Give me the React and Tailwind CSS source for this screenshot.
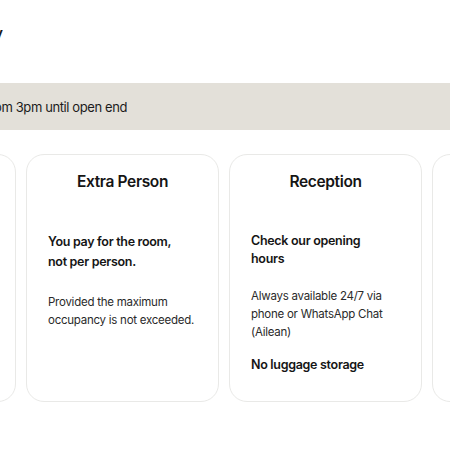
const cards = [
  {
    title: "Check-in",
    blocks: [
      { kind: "bold", lines: ["From 3pm"] },
      { kind: "small", lines: ["Self check-in with code."] },
    ],
  },
  {
    title: "Extra Person",
    blocks: [
      { kind: "bold", lines: ["You pay for the room,", "not per person."], lead: "leading-[20px]" },
      { kind: "small", lines: ["Provided the maximum", "occupancy is not exceeded."], gap: "mt-[21px]" },
    ],
  },
  {
    title: "Reception",
    blocks: [
      { kind: "bold", lines: ["Check our opening", "hours"], lead: "leading-[18px]" },
      { kind: "small", lines: ["Always available 24/7 via", "phone or WhatsApp Chat", "(Ailean)"], gap: "mt-[19px]" },
      { kind: "bold", lines: ["No luggage storage"], gap: "mt-[15px]", lead: "leading-[18px]" },
    ],
  },
  {
    title: "Parking",
    blocks: [
      { kind: "bold", lines: ["Public parking nearby"] },
      { kind: "small", lines: ["Ask us for directions."] },
    ],
  },
];

const Card = ({ card }) => (
  <div className="w-[193px] h-[248px] shrink-0 rounded-[18px] border border-[#e9e9e7] bg-white px-[21px] pt-[15px]">
    <h3 className="text-center text-[15.5px] leading-[24px] tracking-[-0.35px] font-semibold text-[#151515]">
      {card.title}
    </h3>
    <div className="mt-[38px] whitespace-nowrap">
      {card.blocks.map((b, i) =>
        b.kind === "bold" ? (
          <p
            key={i}
            className={`${b.gap || ""} ${b.lead || "leading-[19px]"} text-[12.5px] tracking-[-0.3px] font-semibold text-[#151515]`}
          >
            {b.lines.map((l, j) => (
              <span key={j} className="block">{l}</span>
            ))}
          </p>
        ) : (
          <p
            key={i}
            className={`${b.gap || ""} text-[11.5px] leading-[18px] tracking-[-0.25px] text-[#2a2a2a]`}
          >
            {b.lines.map((l, j) => (
              <span key={j} className="block">{l}</span>
            ))}
          </p>
        )
      )}
    </div>
  </div>
);

export default function App() {
  return (
    <div className="w-[450px] h-[450px] overflow-hidden bg-white font-['Inter',sans-serif] text-[#1a1a1a]">
      <div className="h-[83px] pt-[24px]">
        <div className="w-[3px] flex justify-end overflow-hidden whitespace-nowrap">
          <span className="text-[18px] leading-[20px] font-medium">Good to know before your stay</span>
        </div>
      </div>
      <div className="h-[47px] bg-[#e3e0d9] flex items-center">
        <div className="w-[127px] flex justify-end overflow-hidden whitespace-nowrap">
          <span className="shrink-0 text-[13px] leading-[20px] tracking-[-0.4px] text-[#1c1c1c]">
            Check-in from 3pm until open end
          </span>
        </div>
      </div>
      <div className="mt-[24px] -ml-[177px] flex gap-[10px]">
        {cards.map((c) => (
          <Card key={c.title} card={c} />
        ))}
      </div>
    </div>
  );
}
